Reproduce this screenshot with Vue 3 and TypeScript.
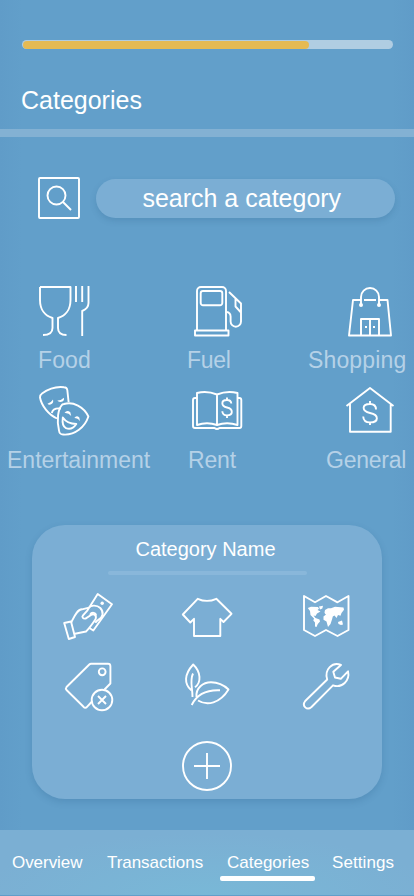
<script setup lang="ts">
interface Tile {
  name: string
  cls: string
  box: string
  lines: string[]
  fills?: string[]
}

const progress = 77.4

const categories: Tile[] = [
  {
    name: 'Food', cls: 'food', box: '36 283 56 56',
    lines: [
      'M40 287H70.5V300C70.5 310 65 316 58 318V328Q58 335 66.5 335',
      'M40 287V300C40 310 45.5 316 52.5 318V328Q52.5 335 43 335',
      'M76 286V302M82.2 286V302M88.5 286V303Q88.5 308.5 82.2 311V336',
    ],
  },
  {
    name: 'Fuel', cls: 'fuel', box: '190 283 56 56',
    lines: [
      'M197 330.5V291a4 4 0 0 1 4-4H222a4 4 0 0 1 4 4V330.5M195 330.5H228.5V335.5H195Z',
      'M203 291H220a2.3 2.3 0 0 1 2.3 2.3V303a2.3 2.3 0 0 1-2.3 2.3H203a2.3 2.3 0 0 1-2.3-2.3V293.3a2.3 2.3 0 0 1 2.3-2.3Z',
      'M229 292L241 303.5V321.5a5.2 5.2 0 0 1-10.4 0V316.5Q230.5 312.5 226.5 312M235.5 298.5V306.5L241 312.5',
    ],
  },
  {
    name: 'Shopping', cls: 'shopping', box: '342 283 56 56',
    lines: [
      'M361 300H353L349 335.5H391L387.5 300H379M364 300H376M361 304V297a9 9 0 0 1 18 0V304',
      'M361 335V319H379V335M370 319V335',
    ],
    fills: [
      'M359 305a2 2 0 1 0 4 0a2 2 0 1 0-4 0ZM377 305a2 2 0 1 0 4 0a2 2 0 1 0-4 0Z',
      'M365 326h2v2h-2ZM373 326h2v2h-2Z',
    ],
  },
  {
    name: 'Entertainment', cls: 'entertainment', box: '36 383 56 56',
    lines: [
      'M57 418.5C49 415 41.5 406 40 397.5Q39.8 395 42 393.5C49 388.5 57 386.3 64 387.2Q67 387.5 67.3 390L68.6 402',
      'M64 404C73 401 84 407 88.4 416.5C85 427 75 435.5 63 434.5Q59.5 434.5 59 430.5C56.5 420 58 409 62 404.8Q63 404 64 404Z',
      'M51.8 413Q53 407.5 61 408.5',
      'M62.8 417.5Q67 423.8 76.3 424Q72 430.5 66 428.2Q61.7 426 62.8 417.5Z',
    ],
    fills: [
      'M47.5 403.8Q51 402.8 53 399.5Q54 403.5 50.5 404.5Q48.5 405 47.5 403.8Z',
      'M57.3 400.5Q61 400.8 63.8 397.8Q64.8 400.8 61.5 401.8Q58.5 402.3 57.3 400.5Z',
      'M64.5 413Q67 409.5 70.3 412.3L71.2 416Q68.5 412.5 64.5 413Z',
      'M74.3 418Q76.5 414.8 79.3 417.5L80 421.3Q77.8 418 74.3 418Z',
    ],
  },
  {
    name: 'Rent', cls: 'rent', box: '190 383 56 56',
    lines: [
      'M197 398H195Q193 398 193 400V426Q193 428 195 428H214.5Q217 430 219.5 428H239.5Q241.3 428 241.3 426V400Q241.3 398 239.3 398H237.5',
      'M217 394.5V424.5M217 394.5Q207 390.5 197 393V425Q207 421.5 217 425Q227 421.5 237.5 425V393Q227 390.5 217 394.5',
      'M231.3 403.5Q231 400 227 400C220.8 400 220.8 406 227 407.5C233.6 409 233.2 415.4 227 415.4Q222.6 415.4 222.3 411.3M227 397.5V400M227 415.2V418',
    ],
  },
  {
    name: 'General', cls: 'general', box: '342 383 56 56',
    lines: [
      'M346.5 406L370 388L393.5 406M350 403.5V431.8H390.7V403.5',
      'M376 409.5C376 406 373.5 404 370 404C361.5 404 361.5 411.3 370 413C379.3 414.8 379 422.4 370 422.4C366 422.4 363.4 420.3 363.2 416.5M370 401V404M370 422V425',
    ],
  },
]

const choices: Tile[] = [
  {
    name: 'Payment', cls: 'pay', box: '61 588 56 56',
    lines: [
      'M64.2 623L71 621.5L75 637L68.8 639Z',
      'M71.2 622.5C74 617 77 609.5 82 609.3L89 607.6M75 633.7L86 631.5Q90 627.5 95.5 619.2C97 615.5 94 613 91 615L85.5 618.6C83 619 81.5 617 83 615.3L87.5 610.3L97.7 594L112 604.3L93.3 630.5L89.8 628.3',
      'M89 607.5C91 604.8 97 605 100.3 608C104 612 103.3 617 98.3 619.8C96.5 620.8 96 621.8 95.3 622.8M90 614.8C92 611.5 96 612.8 96 615.5',
    ],
    fills: ['M100.5 603.3a1.7 1.7 0 1 0 3.4 0a1.7 1.7 0 1 0-3.4 0Z'],
  },
  {
    name: 'Clothes', cls: 'shirt', box: '179 588 56 56',
    lines: ['M197.7 598.8Q207 603 216.3 598.8L231.5 613.8L223.5 622L220.3 618.8V636H194V618.8L190.3 622.5L182.8 614.5Z'],
  },
  {
    name: 'Travel', cls: 'map', box: '298 588 56 56',
    lines: ['M304 596L315 602.3L326 596L337.5 602.3L348.5 596V630L337.5 636L326 630L315 636L304 630Z'],
    fills: [
      'M307.8 608L311 606.8L318 607L319 608.8L317.5 610L320.5 611.5L317 613.5L315.5 616L313.5 615.5L315.5 618L319.5 619.5L320 621.5L317.8 624L316.5 627L315 626.5L315 622.5L313.3 620.5L314 618.5L310.5 615L310 611Z',
      'M319 606.5L323 605.8L322.3 608.5L320 609.5Z',
      'M324.5 612.5L325 610L328 608.2L331 608.2L335 606.8L343.5 607.5L344 609.8L341.5 613L340.5 615.8L338 615L336.5 618L334.5 615.5L332.8 616.5L332 619.5L330.5 624L328 627L326.5 621.5L323.5 619.8L323.5 616.5L326 614.5L325 613.8Z',
      'M338 622L342 620.5L343 624.5L341 625L338.5 624Z',
    ],
  },
  {
    name: 'Bills', cls: 'tag', box: '61 658 56 56',
    lines: [
      'M91.5 702L87 706.8Q85.3 708.8 83.5 706.8L66.5 690Q65.3 688.5 66.5 687L89.3 664.5Q90 663.8 91 663.8H108Q110.4 663.8 110.4 666.2V683.5L104.5 689.5',
      'M98.8 671.8a3.4 3.4 0 1 0 6.8 0a3.4 3.4 0 1 0-6.8 0Z',
      'M91.7 700a10.3 10.3 0 1 0 20.6 0a10.3 10.3 0 1 0-20.6 0ZM98 696L106 704M106 696L98 704',
    ],
  },
  {
    name: 'Nature', cls: 'leaf', box: '179 658 56 56',
    lines: [
      'M191.3 690.3C184 684 184 674.5 193.2 664.5C201 672 201.5 682.5 195 687.3M193 673.5C189.5 681 192.5 687 192.5 697',
      'M196.5 697C195.5 688 203 682.2 211 682.2Q221 682.2 228.5 689.5C220 703.5 207 706 198 700.5M191.7 705C197 694 207 689.7 220 690.3',
    ],
  },
  {
    name: 'Repairs', cls: 'wrench', box: '298 658 56 56',
    lines: ['M341 665C332.5 661.5 324 669.5 327.2 679.5L305.2 701C301.5 706 307 711 311.5 707L333 685.3C342 688.5 350.2 680.5 348 671.3L340.8 678.8L335 677.5L333.3 671.8Z'],
  },
]

const tabs = ['Overview', 'Transactions', 'Categories', 'Settings']
</script>

<template>
  <main class="screen">
    <header>
      <div class="track"><div class="fill" :style="{ width: progress + '%' }"></div></div>
      <h1>Categories</h1>
    </header>
    <div class="strip"></div>
    <section class="search">
      <svg class="glass" viewBox="38 177 42 42">
        <rect x="39" y="178" width="40" height="40" rx="1" />
        <circle cx="56.5" cy="195.5" r="9" />
        <path d="M63 202L71 210" />
      </svg>
      <div class="pill">search a category</div>
    </section>
    <section class="grid">
      <div v-for="c in categories" :key="c.cls" class="tile" :class="c.cls">
        <svg class="icon" :viewBox="c.box">
          <path v-for="d in c.lines" :key="d" :d="d" />
          <path v-for="d in c.fills" :key="d" class="solid" :d="d" />
        </svg>
        <span>{{ c.name }}</span>
      </div>
    </section>
    <section class="card">
      <h2>Category Name</h2>
      <div class="rule"></div>
      <div class="choices">
        <svg v-for="c in choices" :key="c.cls" class="icon" :viewBox="c.box">
          <path v-for="d in c.lines" :key="d" :d="d" />
          <path v-for="d in c.fills" :key="d" class="solid" :d="d" />
        </svg>
      </div>
      <svg class="add" viewBox="0 0 50 50">
        <circle cx="25" cy="25" r="24" />
        <path d="M12 25H38M25 12V38" />
      </svg>
    </section>
    <nav>
      <a v-for="t in tabs" :key="t" :class="[t.toLowerCase(), { active: t === 'Categories' }]">{{ t }}</a>
    </nav>
  </main>
</template>

<style>
body { margin: 0; background: #629fca; }
</style>

<style scoped>
* { box-sizing: border-box; }
.screen {
  width: 414px;
  height: 896px;
  overflow: hidden;
  display: flex;
  flex-direction: column;
  color: #fff;
  font-family: "Liberation Sans", Arial, sans-serif;
  background: linear-gradient(90deg, #609cc8 0, #629fca 22px, #629fca 392px, #609cc8 100%);
}
header { height: 129px; padding: 40px 21px 0 22px; }
.track { height: 9px; padding: 0.5px; border-radius: 5px; background: #b0cde2; }
.fill { height: 8px; border-radius: 4px; background: #e5ba53; }
h1 { margin: 37px 0 0 -1px; font-size: 25px; line-height: 28px; font-weight: 400; }
.strip { height: 8px; background: #83b1d3; }
.search { display: flex; align-items: center; gap: 15.5px; padding: 40px 19px 0 38px; height: 82px; }
svg { display: block; fill: none; stroke: #fff; stroke-width: 1.9; stroke-linejoin: round; flex: none; }
.glass { width: 42px; height: 42px; }
.pill {
  flex: 1;
  height: 39px;
  border-radius: 20px;
  background: #7baed4;
  box-shadow: 0 3px 6px rgba(30, 80, 120, 0.17);
  text-align: center;
  font-size: 25px;
  line-height: 38px;
  padding-right: 7px;
}
.grid {
  display: grid;
  grid-template-columns: 154px 152px 108px;
  grid-auto-rows: 100px;
  margin-top: 64px;
  height: 242px;
}
.icon { width: 56px; height: 56px; }
.tile { min-width: 0; }
.tile .icon { margin-left: 36px; }
.tile span { display: block; margin-top: 7px; line-height: 28px; font-size: 23px; white-space: nowrap; color: #b5d1e7; }
.food span { margin-left: 38px; letter-spacing: 0.1px; }
.fuel span { margin-left: 33px; letter-spacing: -0.3px; }
.shopping span { margin-left: 2px; letter-spacing: 0.15px; }
.entertainment span { margin-left: 7px; }
.rent span { margin-left: 34px; letter-spacing: -0.15px; }
.general span { margin-left: 20px; letter-spacing: -0.25px; }
.solid { fill: #fff; stroke: none; }
.card {
  width: 350px;
  height: 274px;
  margin-left: 32px;
  border-radius: 33px;
  background: #7baed4;
  box-shadow: 0 3px 7px rgba(30, 80, 120, 0.18);
  display: flex;
  flex-direction: column;
  align-items: center;
}
h2 { margin: 13px 0 0; padding-right: 3px; font-size: 20px; line-height: 23px; font-weight: 400; }
.rule { width: 199px; height: 4px; margin-top: 10px; border-radius: 2px; background: #89b7da; }
.choices {
  align-self: stretch;
  display: grid;
  grid-template-columns: 118px 119px 56px;
  grid-auto-rows: 70px;
  padding-left: 29px;
  margin-top: 13px;
}
.add { width: 50px; height: 50px; margin-top: 13px; }
nav {
  height: 65px;
  margin-top: 31px;
  padding: 23px 0 0 12px;
  display: flex;
  font-size: 17px;
  line-height: 20px;
  background: radial-gradient(ellipse 230px 62px at 50% 100%, #79b8d7 0, #7bafd3 100%);
}
nav a { height: 28px; white-space: nowrap; }
.overview { width: 95px; letter-spacing: -0.05px; }
.transactions { width: 113px; letter-spacing: -0.05px; }
.categories { width: 95px; padding-left: 7px; }
.settings { padding-left: 17px; letter-spacing: 0.08px; }
.active::after {
  content: "";
  display: block;
  height: 5px;
  margin: 3px 0 0 -7px;
  border-radius: 2px;
  background: #fff;
}
</style>
